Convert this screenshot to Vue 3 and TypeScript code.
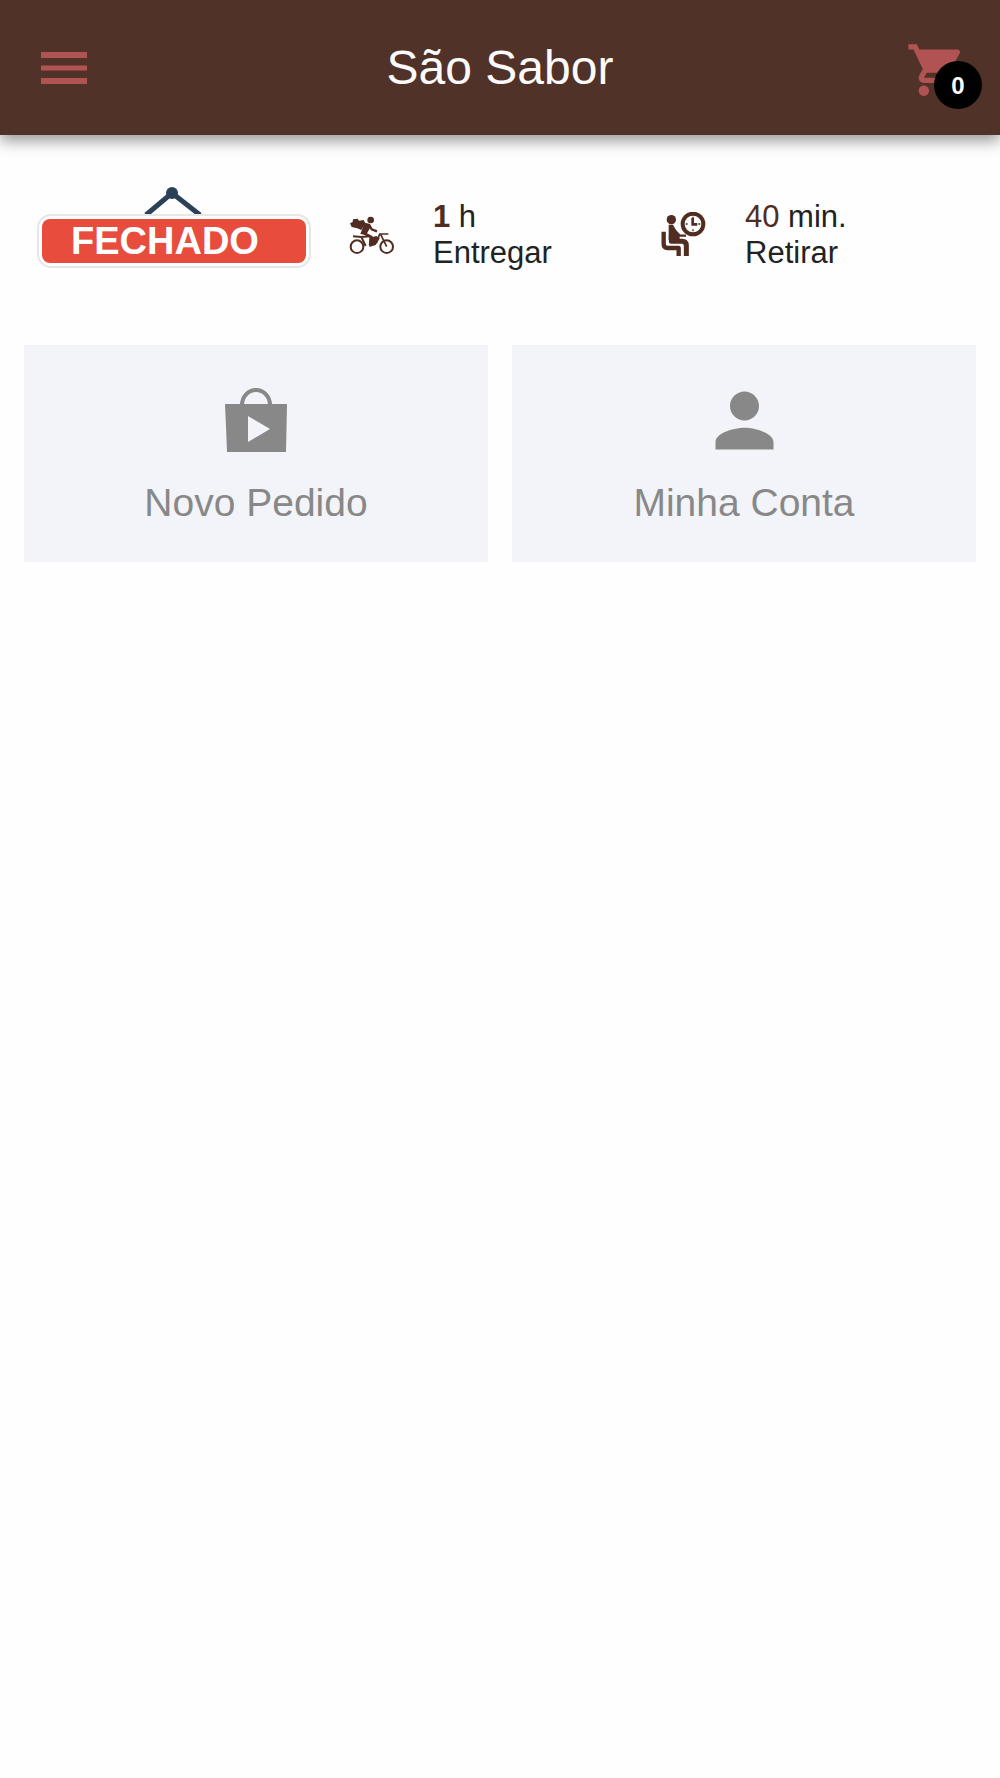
<script setup lang="ts">
import { ref } from 'vue'

interface Service {
  id: 'delivery' | 'pickup'
  amount: string
  unit: string
  label: string
  strong: boolean
}

const cartCount = ref<number>(0)

const services: Service[] = [
  { id: 'delivery', amount: '1', unit: 'h', label: 'Entregar', strong: true },
  { id: 'pickup', amount: '40', unit: 'min.', label: 'Retirar', strong: false },
]
</script>

<template>
  <div class="page">
    <header class="toolbar">
      <button class="tool" type="button" aria-label="Menu">
        <svg class="tool-icon" viewBox="0 0 62 62" aria-hidden="true">
          <path d="M8 15h46v6H8zM8 28.5h46v5H8zM8 41h46v6H8z" />
        </svg>
      </button>
      <h1 class="title">São Sabor</h1>
      <button class="tool" type="button" aria-label="Carrinho">
        <svg class="tool-icon" viewBox="-0.3 -0.8 24 24" aria-hidden="true">
          <path
            d="M7 18c-1.1 0-1.99.9-1.99 2S5.9 22 7 22s2-.9 2-2-.9-2-2-2zM1 2v2h2l3.6 7.59-1.35 2.45c-.16.28-.25.61-.25.96 0 1.1.9 2 2 2h12v-2H7.42c-.14 0-.25-.11-.25-.25l.03-.12.9-1.63h7.45c.75 0 1.41-.41 1.75-1.03l3.58-6.49A1.003 1.003 0 0 0 20 4H5.21l-.94-2H1zm16 16c-1.1 0-1.99.9-1.99 2s.89 2 1.99 2 2-.9 2-2-.9-2-2-2z"
          />
        </svg>
        <span class="badge">{{ cartCount }}</span>
      </button>
    </header>

    <main>
      <section class="status">
        <div class="cell sign">
          <svg class="hanger" viewBox="0 0 60 28" aria-hidden="true">
            <path d="M2 29 28 7 56 29" fill="none" stroke="#2c4057" stroke-width="5" />
            <circle cx="28" cy="7" r="6" fill="#2c4057" />
          </svg>
          <div class="plate"><strong class="plate-text">FECHADO</strong></div>
        </div>

        <div v-for="s in services" :key="s.id" class="cell service">
          <svg
            v-if="s.id === 'delivery'"
            class="service-icon"
            viewBox="57 64 138 138"
            aria-hidden="true"
          >
            <g fill="none" stroke="#512c21">
              <circle cx="81" cy="168" r="19" stroke-width="6" />
              <circle cx="170" cy="168" r="19" stroke-width="6" />
              <path d="M69 137 94 139 119 137M94 139 107 166" stroke-width="6" />
              <path d="M118 104 125 116 141 122" stroke-width="7" />
              <path d="M152 130h23M152 131 170 168M150 128 139 158" stroke-width="5" />
              <path d="M103 128 124 139 120 164" stroke-width="8" />
            </g>
            <g fill="#512c21">
              <circle cx="122" cy="88" r="10" />
              <path d="M60 98 68 94 69 86 83 84 87 90 101 88 106 98 94 118 82 113 65 109z" />
              <path d="M104 96 121 100 119 114 108 133 91 130z" />
              <path d="M118 142 139 136 149 143 137 163 118 169z" />
            </g>
          </svg>
          <svg v-else class="service-icon" viewBox="63 66 138 138" aria-hidden="true">
            <g fill="none" stroke="#512c21">
              <circle cx="159" cy="102" r="31" stroke-width="12" />
              <path d="M159 80v6M159 118v6M137 102h6M175 102h6" stroke-width="4" />
              <path d="M158 84v19h14" stroke-width="8" />
              <path
                d="M71 125v37q0 12 12 12h33v24"
                stroke-width="13"
                stroke-linejoin="round"
              />
              <path
                d="M94 134v20h32q13 0 13 13v31"
                stroke-width="15"
                stroke-linejoin="round"
              />
              <path d="M103 120 119 137H138" stroke-width="7" />
            </g>
            <g fill="#512c21">
              <circle cx="94" cy="89" r="14" />
              <path d="M86 104h13l20 36v10H86z" />
            </g>
          </svg>
          <p class="service-text">
            <span class="amount" :class="{ strong: s.strong }">{{ s.amount }}</span>
            {{ s.unit }}<br />{{ s.label }}
          </p>
        </div>
      </section>

      <nav class="cards">
        <a class="card" href="#pedido">
          <svg class="card-icon" viewBox="0 0 87 87" aria-hidden="true">
            <path
              fill-rule="evenodd"
              d="M12 27H74L73 75H14L13 50zM35 39V65L57 52z"
            />
            <path d="M29 28a14 15 0 0 1 28 0" fill="none" stroke="#888" stroke-width="4" />
          </svg>
          <span>Novo Pedido</span>
        </a>
        <a class="card" href="#conta">
          <svg class="card-icon" viewBox="0 0 24 24" aria-hidden="true">
            <path
              d="M12 12c2.21 0 4-1.79 4-4s-1.79-4-4-4-4 1.79-4 4 1.79 4 4 4zm0 2c-2.67 0-8 1.34-8 4v2h16v-2c0-2.66-5.33-4-8-4z"
            />
          </svg>
          <span>Minha Conta</span>
        </a>
      </nav>
    </main>
  </div>
</template>

<style>
body {
  background: #fefefe;
}
</style>

<style scoped>
.page {
  font-family: 'Liberation Sans', Arial, sans-serif;
  color: #222;
}

.toolbar {
  display: flex;
  align-items: center;
  justify-content: space-between;
  height: 135px;
  padding: 0 33px;
  box-sizing: border-box;
  background: #513228;
  box-shadow: 0 6px 14px rgba(0, 0, 0, 0.4);
}

.tool {
  position: relative;
  display: block;
  width: 62px;
  height: 62px;
  padding: 0;
  border: 0;
  background: none;
}

.tool-icon {
  display: block;
  width: 100%;
  height: 100%;
  fill: #b25353;
}

.badge {
  position: absolute;
  top: 24px;
  right: -15px;
  width: 48px;
  height: 48px;
  border-radius: 50%;
  background: #000;
  color: #fff;
  font: bold 24px/50px 'Liberation Sans', Arial, sans-serif;
  text-align: center;
}

.title {
  margin: 0;
  font-size: 48px;
  font-weight: 400;
  line-height: 56px;
  color: #fafafa;
}

.status {
  display: grid;
  grid-template-columns: repeat(3, 1fr);
  align-items: start;
  padding: 51px 32px 0;
}

.cell {
  padding: 0 5px;
}

.sign {
  max-width: 274px;
}

.hanger {
  display: block;
  width: 60px;
  height: 28px;
  margin: 0 auto;
}

.plate {
  padding: 3px;
  border: 2px solid #e6e6e6;
  border-radius: 14px;
  background: #fff;
}

.plate-text {
  display: block;
  padding-right: 18px;
  border-radius: 8px;
  background: #e84c3d;
  color: #fff;
  font-size: 38px;
  line-height: 44px;
  text-align: center;
}

.service {
  display: flex;
  align-items: center;
  gap: 38px;
  padding-top: 13px;
}

.service-icon {
  flex: none;
  width: 46px;
  height: 46px;
}

.service-text {
  margin: 0;
  font-size: 31px;
  line-height: 36px;
}

.amount {
  color: #512c21;
}

.amount.strong {
  font-weight: 700;
}

.cards {
  display: grid;
  grid-template-columns: 1fr 1fr;
  gap: 24px;
  padding: 74px 24px 24px;
}

.card {
  display: flex;
  flex-direction: column;
  align-items: center;
  gap: 16px;
  padding: 32px 16px 36px;
  background: #f3f4f9;
  color: #888;
  font-size: 39px;
  line-height: 46px;
  text-decoration: none;
}

.card-icon {
  width: 87px;
  height: 87px;
  fill: #888;
}
</style>
